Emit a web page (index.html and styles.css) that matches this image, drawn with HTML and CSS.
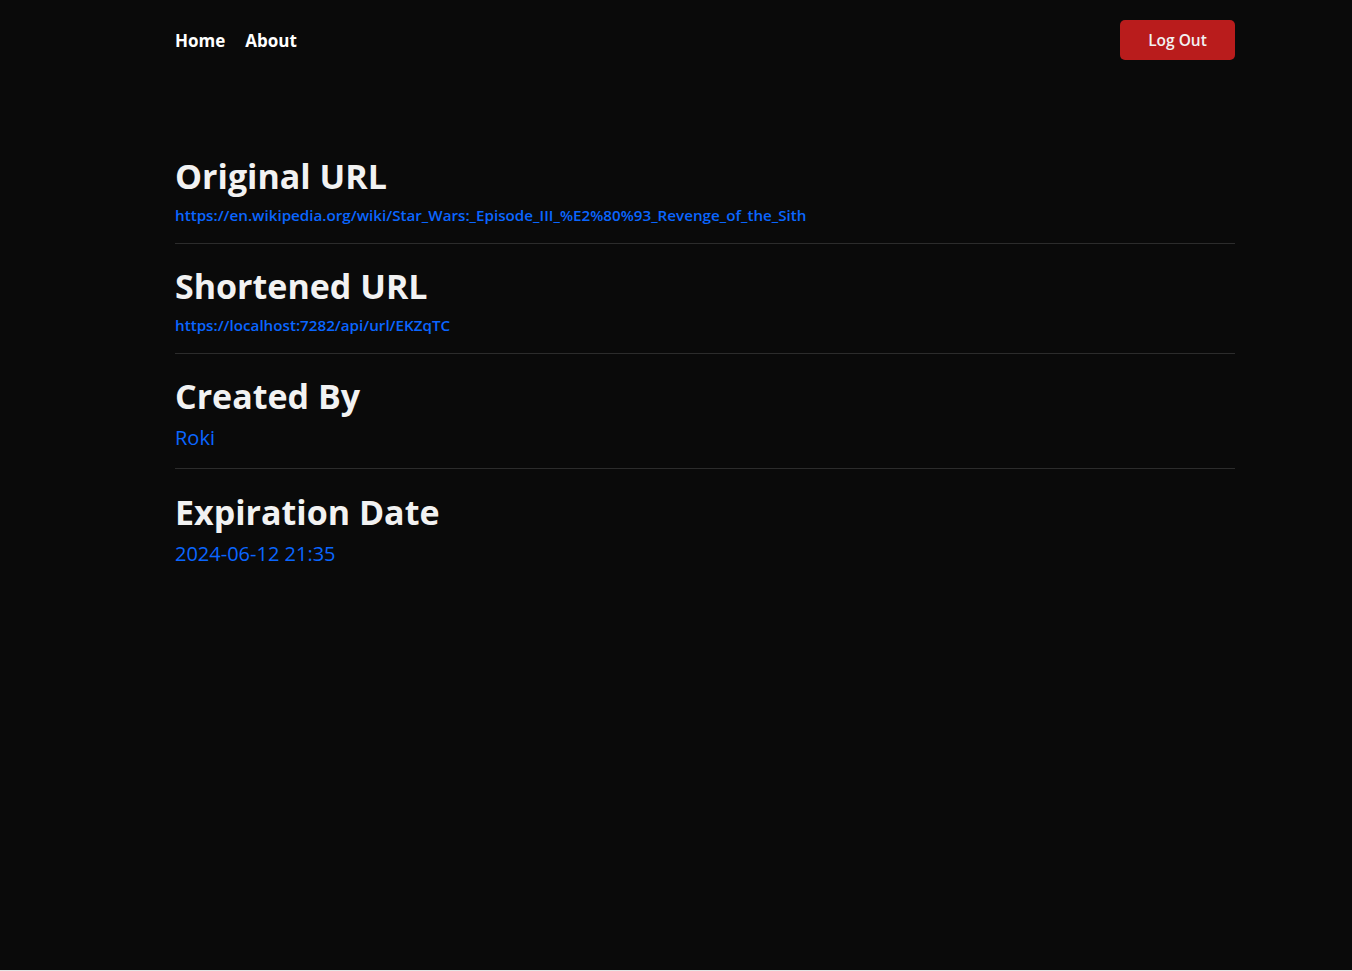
FILE: index.html
```html
<!DOCTYPE html>
<html lang="en">
<head>
<meta charset="utf-8">
<title>URL Details</title>
<link rel="stylesheet" href="styles.css">
</head>
<body>
<div class="page">
  <header class="nav">
    <nav class="nav-links">
      <a class="nav-link" href="#">Home</a>
      <a class="nav-link" href="#">About</a>
    </nav>
    <button class="logout">Log Out</button>
  </header>
  <main class="details">
    <section class="item">
      <h2 class="label">Original URL</h2>
      <a class="value small" href="#">https://en.wikipedia.org/wiki/Star_Wars:_Episode_III_%E2%80%93_Revenge_of_the_Sith</a>
    </section>
    <section class="item">
      <h2 class="label">Shortened URL</h2>
      <a class="value small" href="#">https://localhost:7282/api/url/EKZqTC</a>
    </section>
    <section class="item item-large">
      <h2 class="label">Created By</h2>
      <span class="value large">Roki</span>
    </section>
    <section class="item item-large last">
      <h2 class="label">Expiration Date</h2>
      <span class="value large">2024-06-12 21:35</span>
    </section>
  </main>
</div>
</body>
</html>
```

FILE: styles.css
```css
html { background: #e5e5e5; }
body {
  margin: 0;
  height: 970px;
  background: #0a0a0a;
  font-family: "Open Sans", "Noto Sans", sans-serif;
  color: #f2f2f2;
}
.page {
  padding: 0 117px 0 175px;
}
.nav {
  display: flex;
  justify-content: space-between;
  align-items: center;
  padding-top: 20px;
  height: 40px;
}
.nav-links {
  display: flex;
  gap: 20px;
}
.nav-link {
  color: #ffffff;
  text-decoration: none;
  font-weight: 700;
  font-size: 17px;
}
.logout {
  width: 115px;
  height: 40px;
  background: #b91c1c;
  color: #f2f2f2;
  border: none;
  border-radius: 5px;
  font-family: inherit;
  font-size: 15.5px;
  font-weight: 600;
}
.details {
  padding-top: 93px;
}
.item {
  border-bottom: 1px solid #2c2c2c;
  padding-bottom: 17px;
  margin-bottom: 19px;
  display: flex;
  flex-direction: column;
  align-items: flex-start;
}
.item-large { padding-bottom: 16px; margin-bottom: 20px; }
.item.last { border-bottom: none; }
.label {
  margin: 0;
  font-size: 34px;
  font-weight: 700;
  line-height: 46px;
  color: #f2f2f2;
}
.value {
  color: #0a66ff;
  text-decoration: none;
}
.value.small {
  margin-top: 5px;
  font-size: 15.2px;
  font-weight: 600;
  line-height: 22px;
}
.value.large {
  margin-top: 5px;
  font-size: 20px;
  font-weight: 500;
  line-height: 28px;
}
```
